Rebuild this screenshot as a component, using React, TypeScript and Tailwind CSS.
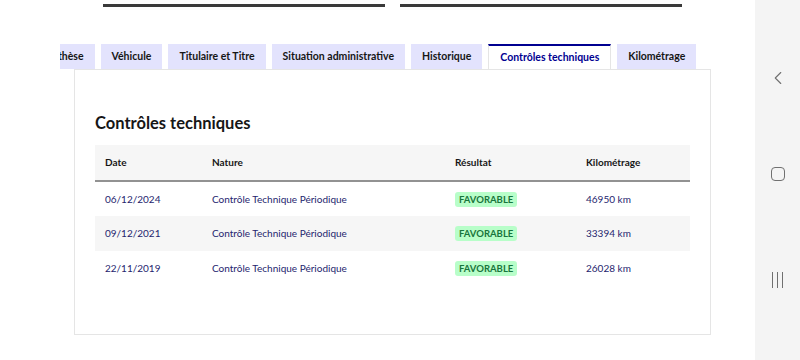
import { ChevronLeft } from 'lucide-react';

const tabs = [
  'Synthèse',
  'Véhicule',
  'Titulaire et Titre',
  'Situation administrative',
  'Historique',
  'Contrôles techniques',
  'Kilométrage',
];

const rows = [
  { date: '06/12/2024', nature: 'Contrôle Technique Périodique', resultat: 'FAVORABLE', km: '46950 km' },
  { date: '09/12/2021', nature: 'Contrôle Technique Périodique', resultat: 'FAVORABLE', km: '33394 km' },
  { date: '22/11/2019', nature: 'Contrôle Technique Périodique', resultat: 'FAVORABLE', km: '26028 km' },
];

export default function App() {
  const active = 'Contrôles techniques';

  return (
    <div className="w-[800px] h-[360px] flex bg-white overflow-hidden font-['Lato','Noto_Sans',sans-serif] text-[#161616]">
      <div className="flex-1 flex flex-col">
        {/* bottom of the previous buttons */}
        <div className="flex pl-[103px] gap-[15px] pt-[4px]">
          <div className="w-[282px] h-[3px] bg-[#3a3a3a]" />
          <div className="w-[282px] h-[3px] bg-[#3a3a3a]" />
        </div>

        {/* tab list, scrolled */}
        <div className="mt-[37px] ml-[60px] w-[650px] overflow-hidden">
          <div className="flex items-end gap-[6px] -ml-[30px]">
            {tabs.map((t) => (
              <div
                key={t}
                className={`shrink-0 h-[25px] px-[11px] flex items-center text-[10.5px] font-bold whitespace-nowrap ${
                  t === active
                    ? 'bg-white text-[#000091] border-t-2 border-[#000091] border-x border-x-[#e5e5e5] h-[26px] -mb-px relative z-10'
                    : 'bg-[#e3e3fd] text-[#161616]'
                }`}
              >
                {t}
              </div>
            ))}
          </div>
        </div>

        {/* panel */}
        <div className="ml-[74px] w-[637px] h-[266px] border border-[#e5e5e5] px-[20px] pt-[42px]">
          <h2 className="text-[16.5px] font-bold leading-[22px] text-[#161616]">Contrôles techniques</h2>
          <table className="mt-[11px] w-full text-[10px] border-collapse">
            <thead>
              <tr className="bg-[#f6f6f6] border-b-2 border-[#929292]">
                <th className="h-[36px] pl-[10px] text-left font-bold w-[117px]">Date</th>
                <th className="text-left font-bold w-[243px]">Nature</th>
                <th className="text-left font-bold w-[131px]">Résultat</th>
                <th className="text-left font-bold">Kilométrage</th>
              </tr>
            </thead>
            <tbody>
              {rows.map((r, i) => (
                <tr key={r.date} className={i % 2 === 1 ? 'bg-[#f6f6f6]' : 'bg-white'}>
                  <td className="h-[35px] pl-[10px] text-[#25256e]">{r.date}</td>
                  <td className="text-[#25256e]">{r.nature}</td>
                  <td>
                    <span className="inline-block bg-[#b8fec9] text-[#18753c] text-[9.5px] font-bold rounded-[3px] px-[4px] leading-[15px]">
                      {r.resultat}
                    </span>
                  </td>
                  <td className="text-[#25256e]">{r.km}</td>
                </tr>
              ))}
            </tbody>
          </table>
        </div>
      </div>

      {/* android nav bar */}
      <div className="w-[45px] bg-[#f4f4f4] flex flex-col items-center text-[#707070]">
        <ChevronLeft className="mt-[67px]" size={22} strokeWidth={1.2} />
        <div className="mt-[78px] w-[14px] h-[14px] border-[1.3px] border-[#707070] rounded-[4px]" />
        <div className="mt-[91px] flex gap-[4px]">
          <div className="w-[1.3px] h-[16px] bg-[#707070]" />
          <div className="w-[1.3px] h-[16px] bg-[#707070]" />
          <div className="w-[1.3px] h-[16px] bg-[#707070]" />
        </div>
      </div>
    </div>
  );
}
